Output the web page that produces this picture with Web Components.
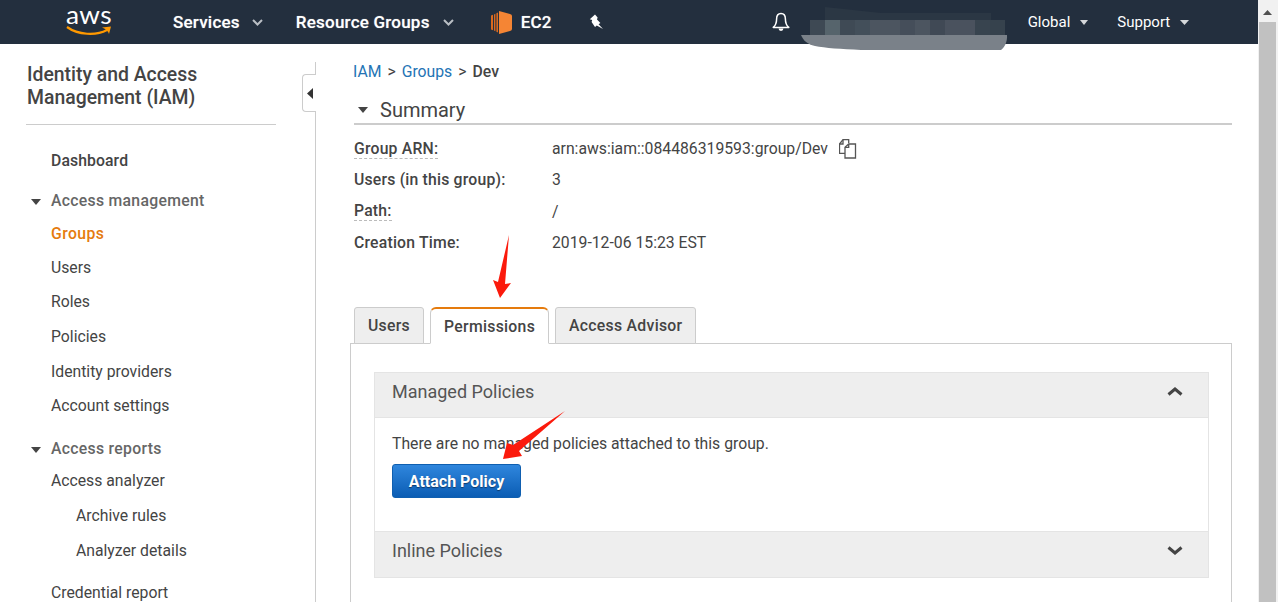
<!DOCTYPE html>
<html>
<head>
<meta charset="utf-8">
<title>IAM Group</title>
<style>
    html, body { margin: 0; height: 602px; overflow: hidden; background: #fff; }
    body { display: flex; font-family: Roboto, "Liberation Sans", sans-serif; font-size: 15.75px; color: #444; }
</style>
</head>
<body>
<div id="app" style="position:relative;width:1258px;height:602px;display:flex;flex-direction:column;flex:none;">
    <aws-nav></aws-nav>
    <div style="display:flex;flex:1;min-height:0;">
        <iam-sidebar>
            <side-link kind="top">Dashboard</side-link>
            <side-link kind="head" gap="22">Access management</side-link>
            <side-link kind="active" gap="15">Groups</side-link>
            <side-link gap="16">Users</side-link>
            <side-link gap="16">Roles</side-link>
            <side-link gap="17">Policies</side-link>
            <side-link gap="17">Identity providers</side-link>
            <side-link gap="16">Account settings</side-link>
            <side-link kind="head" gap="25">Access reports</side-link>
            <side-link gap="14">Access analyzer</side-link>
            <side-link kind="sub" gap="17">Archive rules</side-link>
            <side-link kind="sub" gap="17">Analyzer details</side-link>
            <side-link gap="24">Credential report</side-link>
        </iam-sidebar>
        <group-page></group-page>
    </div>
    <red-arrow></red-arrow>
    <redact-blob></redact-blob>
</div>
<fake-scrollbar></fake-scrollbar>

<script>
const navTemplate = document.createElement('template');
navTemplate.innerHTML = `
    <style>
        :host { display: flex; align-items: center; flex: none; height: 44px; background: #232f3e; color: #fff; box-sizing: border-box; }
        .logo { display: block; margin-left: 66px; width: 46px; height: 36px; position: relative; margin-top: -4px; }
        .logo span { display: block; font: 400 25px/24px Lato, sans-serif; letter-spacing: .4px; text-align: center; color: #fff; transform: scaleX(1.05); }
        .logo svg { position: absolute; left: 0; top: 23px; }
        .item { font-weight: 500; font-size: 17px; letter-spacing: .22px; display: flex; align-items: center; text-shadow: 0 0 1px rgba(255,255,255,.5); }
        .caret { margin-left: 12px; }
        .light { font-weight: 400; font-size: 15px; letter-spacing: 0; text-shadow: none; }
    </style>
    <div class="logo">
        <span>aws</span>
        <svg width="46" height="12" viewBox="0 0 46 12">
            <path d="M1 2 C12 10 30 11 41 5" fill="none" stroke="#f90" stroke-width="2.2"/>
            <path d="M36 2.5 L45 1.5 L43 9 C42.6 6.5 40 4 36 2.5Z" fill="#f90"/>
        </svg>
    </div>
    <div class="item" style="margin-left:61px">Services
        <svg class="caret" width="11" height="7" viewBox="0 0 11 7"><path d="M1 1 L5.5 5.5 L10 1" fill="none" stroke="#b9bec4" stroke-width="2"/></svg>
    </div>
    <div class="item" style="margin-left:33px">Resource Groups
        <svg class="caret" style="margin-left:13px" width="11" height="7" viewBox="0 0 11 7"><path d="M1 1 L5.5 5.5 L10 1" fill="none" stroke="#b9bec4" stroke-width="2"/></svg>
    </div>
    <div class="item" style="margin-left:37px">
        <svg width="21" height="23" viewBox="0 0 21 23" style="margin-right:9px">
            <path d="M8 0 L19 3 Q21 3.6 21 5 V18 Q21 19.4 19 20 L8 23 Z" fill="#f58534"/>
            <path d="M0 4.5 L2 3.8 V19.2 L0 18.5Z M3 3.4 L4.4 2.8 V20.2 L3 19.6Z M5.4 2.2 L7 1.4 V21.6 L5.4 20.8Z" fill="#d9691f"/>
        </svg>EC2
    </div>
    <svg style="margin-left:37px" width="15" height="16" viewBox="0 0 15 16">
        <path d="M0.8 5.2 L6 0.6 L8.6 3.4 L8 5.6 L11.4 9 L9.6 10.2 L14 15 L7.8 11.6 L6 13 L2.6 8 L3.2 6 Z" fill="#fff"/>
    </svg>
    <svg style="margin-left:168px" width="18" height="20" viewBox="0 0 18 20">
        <path d="M9 1.5 C5.8 1.5 4.6 4 4.6 7 C4.6 11 3.6 13.5 1.2 15.4 H16.8 C14.4 13.5 13.4 11 13.4 7 C13.4 4 12.2 1.5 9 1.5Z" fill="none" stroke="#fff" stroke-width="1.5" stroke-linejoin="round"/>
        <path d="M6.6 16.5 a2.4 2.4 0 0 0 4.8 0Z" fill="#fff"/>
    </svg>
    <div class="item light" style="margin-left:238px">Global
        <svg style="margin-left:10px" width="8" height="5" viewBox="0 0 8 5"><path d="M0 0 H8 L4 5Z" fill="#d5d8db"/></svg>
    </div>
    <div class="item light" style="margin-left:29px">Support
        <svg style="margin-left:10px" width="9" height="5" viewBox="0 0 9 5"><path d="M0 0 H9 L4.5 5Z" fill="#d5d8db"/></svg>
    </div>
`;
class AwsNav extends HTMLElement {
    constructor() {
        super();
        this.attachShadow({ mode: 'open' });
        this.shadowRoot.appendChild(navTemplate.content.cloneNode(true));
    }
}
customElements.define('aws-nav', AwsNav);

const sidebarTemplate = document.createElement('template');
sidebarTemplate.innerHTML = `
    <style>
        :host { display: block; position: relative; flex: none; width: 316px; height: 558px; box-sizing: border-box; }
        .rail { position: absolute; right: 0; top: 18px; bottom: 0; width: 1px; background: #ccc; }
        .toggle { position: absolute; right: 0; top: 30px; width: 13px; height: 36px; background: #fff; border: 1px solid #ccc; border-right: 0; border-radius: 4px 0 0 4px; display: flex; align-items: center; justify-content: center; }
        .title { margin: 19px 0 0 27px; font-size: 19.4px; line-height: 23px; font-weight: 500; color: #444; }
        hr { margin: 15px 0 0 26px; width: 250px; border: 0; height: 1px; background: #ccc; }
        nav { display: block; }
    </style>
    <div class="rail"></div>
    <div class="toggle"><svg width="6" height="11" viewBox="0 0 6 11"><path d="M6 0 V11 L0 5.5Z" fill="#333"/></svg></div>
    <div class="title">Identity and Access<br>Management (IAM)</div>
    <hr>
    <nav><slot></slot></nav>
`;
class IamSidebar extends HTMLElement {
    constructor() {
        super();
        this.attachShadow({ mode: 'open' });
        this.shadowRoot.appendChild(sidebarTemplate.content.cloneNode(true));
    }
}
customElements.define('iam-sidebar', IamSidebar);

const sideLinkTemplate = document.createElement('template');
sideLinkTemplate.innerHTML = `
    <style>
        :host { display: flex; align-items: center; height: 18px; line-height: 18px; padding-left: 51px; position: relative; color: #444; white-space: nowrap; }
        :host([kind="top"]) { font-weight: 500; margin-top: 27px; letter-spacing: .1px; }
        :host([kind="head"]) { font-weight: 500; color: #666; letter-spacing: .3px; }
        :host([kind="active"]) { font-weight: 500; color: #e57b0d; letter-spacing: .4px; }
        :host([kind="sub"]) { padding-left: 76px; }
        svg { display: none; position: absolute; left: 31px; top: 7px; }
        :host([kind="head"]) svg { display: block; }
    </style>
    <svg width="10" height="6" viewBox="0 0 10 6"><path d="M0 0 H10 L5 6Z" fill="#444"/></svg>
    <slot></slot>
`;
class SideLink extends HTMLElement {
    constructor() {
        super();
        this.attachShadow({ mode: 'open' });
        this.shadowRoot.appendChild(sideLinkTemplate.content.cloneNode(true));
    }
    connectedCallback() {
        let gap = this.getAttribute('gap');
        if (gap) this.style.marginTop = gap + 'px';
    }
}
customElements.define('side-link', SideLink);

const pageTemplate = document.createElement('template');
pageTemplate.innerHTML = `
    <style>
        :host { display: block; flex: 1; min-width: 0; padding: 0 26px 0 34px; box-sizing: border-box; color: #444; }
        .crumbs { margin: 19px 0 0 3px; height: 18px; line-height: 18px; display: flex; gap: 6px; }
        .crumbs a { color: #2474b5; text-decoration: none; }
        .crumbs b { font-weight: 500; }
        .crumbs span { color: #444; }
        .summary { margin: 16px 0 0 4px; height: 26px; border-bottom: 2px solid #ccc; display: flex; align-items: center; font-size: 20px; }
        .summary svg { margin: 0 12px 0 4px; }
        dl { margin: 0 0 0 4px; display: grid; grid-template-columns: 198px 1fr; grid-auto-rows: 31.3px; align-items: center; padding-top: 8px; }
        dt { font-weight: 500; justify-self: start; letter-spacing: .2px; }
        dt.tip { border-bottom: 1px dashed #bbb; line-height: 19px; }
        dd { margin: 0; display: flex; align-items: center; }
        dd svg { margin-left: 11px; margin-top: 1px; }
        .tabs { display: flex; margin: 49px 0 0 4px; gap: 6px; position: relative; z-index: 1; height: 37px; }
        .panel { margin-top: -1px; border: 1px solid #ccc; border-bottom: 0; padding: 28px 22px 0 23px; height: 260px; box-sizing: border-box; }
        .msg { line-height: 18px; }
        .attach { display: flex; align-items: center; justify-content: center; box-sizing: border-box; width: 129px; height: 34px; margin-top: 11px; border-radius: 3px; border: 1px solid #0f5fb0; background: linear-gradient(#2f86dd, #0b5db4); color: #fff; font-weight: 700; font-size: 16px; text-shadow: 0 1px 1px rgba(0,0,0,.45); }
    </style>
    <div class="crumbs"><a>IAM</a><span>&gt;</span><a>Groups</a><span>&gt;</span><b>Dev</b></div>
    <div class="summary">
        <svg width="10" height="6" viewBox="0 0 10 6"><path d="M0 0 H10 L5 6Z" fill="#444"/></svg>Summary
    </div>
    <dl>
        <dt class="tip">Group ARN:</dt>
        <dd>arn:aws:iam::084486319593:group/Dev
            <svg width="18" height="20" viewBox="0 0 18 20" fill="none" stroke="#555" stroke-width="1.3">
                <path d="M9.7 4 V0.7 H4 L0.5 5 V14.3 H6"/><path d="M4 0.7 V5 H0.5"/>
                <path d="M9.7 5 H16.5 V19 H6 V8.3Z"/><path d="M9.7 5 V8.3 H6"/>
            </svg>
        </dd>
        <dt>Users (in this group):</dt><dd>3</dd>
        <dt class="tip">Path:</dt><dd>/</dd>
        <dt>Creation Time:</dt><dd>2019-12-06 15:23 EST</dd>
    </dl>
    <div class="tabs">
        <tab-item>Users</tab-item>
        <tab-item active>Permissions</tab-item>
        <tab-item>Access Advisor</tab-item>
    </div>
    <div class="panel">
        <policy-head open>Managed Policies</policy-head>
        <policy-body>
            <div class="msg">There are no managed policies attached to this group.</div>
            <div class="attach">Attach Policy</div>
        </policy-body>
        <policy-head>Inline Policies</policy-head>
    </div>
`;
class GroupPage extends HTMLElement {
    constructor() {
        super();
        this.attachShadow({ mode: 'open' });
        this.shadowRoot.appendChild(pageTemplate.content.cloneNode(true));
    }
}
customElements.define('group-page', GroupPage);

const tabTemplate = document.createElement('template');
tabTemplate.innerHTML = `
    <style>
        :host { display: flex; align-items: center; box-sizing: border-box; height: 37px; padding: 0 13px; background: #eee; border: 1px solid #ccc; border-radius: 3px 3px 0 0; font-weight: 500; letter-spacing: .3px; color: #444; }
        :host([active]) { background: #fff; border-top: 2px solid #e57b0d; border-bottom-color: #fff; border-radius: 6px 6px 0 0; }
    </style>
    <slot></slot>
`;
class TabItem extends HTMLElement {
    constructor() {
        super();
        this.attachShadow({ mode: 'open' });
        this.shadowRoot.appendChild(tabTemplate.content.cloneNode(true));
    }
}
customElements.define('tab-item', TabItem);

const headTemplate = document.createElement('template');
headTemplate.innerHTML = `
    <style>
        :host { display: flex; align-items: center; justify-content: space-between; box-sizing: border-box; height: 47px; padding: 0 24px 8px 17px; background: #eee; border: 1px solid #e4e4e4; font-size: 18px; color: #555; }
        :host([open]) { height: 46px; }
        svg { display: block; }
    </style>
    <slot></slot>
    <svg width="18" height="11" viewBox="0 0 18 11"><path id="chev" d="M2.5 8.5 L9 3 L15.5 8.5" fill="none" stroke="#444" stroke-width="3"/></svg>
`;
class PolicyHead extends HTMLElement {
    constructor() {
        super();
        this.attachShadow({ mode: 'open' });
        this.shadowRoot.appendChild(headTemplate.content.cloneNode(true));
    }
    connectedCallback() {
        if (!this.hasAttribute('open')) {
            this.shadowRoot.getElementById('chev').setAttribute('d', 'M2.5 2.5 L9 8 L15.5 2.5');
        }
    }
}
customElements.define('policy-head', PolicyHead);

const bodyTemplate = document.createElement('template');
bodyTemplate.innerHTML = `
    <style>
        :host { display: block; box-sizing: border-box; height: 113px; padding: 17px 17px 0; border-left: 1px solid #e4e4e4; border-right: 1px solid #e4e4e4; }
    </style>
    <slot></slot>
`;
class PolicyBody extends HTMLElement {
    constructor() {
        super();
        this.attachShadow({ mode: 'open' });
        this.shadowRoot.appendChild(bodyTemplate.content.cloneNode(true));
    }
}
customElements.define('policy-body', PolicyBody);

const scrollTemplate = document.createElement('template');
scrollTemplate.innerHTML = `
    <style>
        :host { display: block; flex: none; width: 20px; height: 602px; background: #f1f1f1; position: relative; }
        svg { position: absolute; left: 5px; top: 10px; }
        .thumb { position: absolute; left: 1px; right: 2px; top: 22px; bottom: 0; background: #c1c1c1; }
    </style>
    <svg width="9" height="5" viewBox="0 0 9 5"><path d="M0 5 L4.5 0 L9 5Z" fill="#505050"/></svg>
    <div class="thumb"></div>
`;
class FakeScrollbar extends HTMLElement {
    constructor() {
        super();
        this.attachShadow({ mode: 'open' });
        this.shadowRoot.appendChild(scrollTemplate.content.cloneNode(true));
    }
}
customElements.define('fake-scrollbar', FakeScrollbar);

// the two red annotation arrows drawn over the screenshot
const arrowTemplate = document.createElement('template');
arrowTemplate.innerHTML = `
    <style>
        :host { display: block; position: absolute; left: 0; top: 0; width: 1258px; height: 602px; pointer-events: none; }
        svg { display: block; }
    </style>
    <svg width="1258" height="602" viewBox="0 0 1258 602">
        <path d="M509 235 L505 284 L511 283 L500 298 L493 280 L498 282Z" fill="#fb1a0c"/>
        <path d="M565 411 L513 445 L507 443 L503 459 L522 456 L519 451Z" fill="#fb1a0c"/>
    </svg>
`;
class RedArrow extends HTMLElement {
    constructor() {
        super();
        this.attachShadow({ mode: 'open' });
        this.shadowRoot.appendChild(arrowTemplate.content.cloneNode(true));
    }
}
customElements.define('red-arrow', RedArrow);

// pixelated scribble that hides the account name
const blobTemplate = document.createElement('template');
blobTemplate.innerHTML = `
    <style>
        :host { display: block; position: absolute; left: 801px; top: 7px; width: 207px; height: 44px; pointer-events: none; }
        svg { display: block; }
    </style>
    <svg id="art" width="207" height="44" viewBox="0 0 207 44">
        <path d="M24 0 L80 6 H190 V13 H24Z" fill="#2b3744"/>
        <path d="M0 28 H206 C206.500 34 204 40 200 43 H60 C40 42 24 41 14 39 C6 37 2 33 0 28Z" fill="#7a8189"/>
    </svg>
`;
class RedactBlob extends HTMLElement {
    constructor() {
        super();
        this.attachShadow({ mode: 'open' });
        this.shadowRoot.appendChild(blobTemplate.content.cloneNode(true));
    }
    connectedCallback() {
        let low = ['#3e4954','#56646c','#3f4a55','#434f5a','#4c5560','#4c5560','#454e5a','#4c5560','#404955','#4a525e','#4a525e','#38444f','#36424d'];
        let art = this.shadowRoot.getElementById('art');
        low.forEach((color, i) => {
            let tile = document.createElementNS('http://www.w3.org/2000/svg', 'rect');
            tile.setAttribute('x', 9 + i * 15);
            tile.setAttribute('y', 13);
            tile.setAttribute('width', 15);
            tile.setAttribute('height', 15);
            tile.setAttribute('fill', color);
            art.appendChild(tile);
        });
    }
}
customElements.define('redact-blob', RedactBlob);
</script>
</body>
</html>
